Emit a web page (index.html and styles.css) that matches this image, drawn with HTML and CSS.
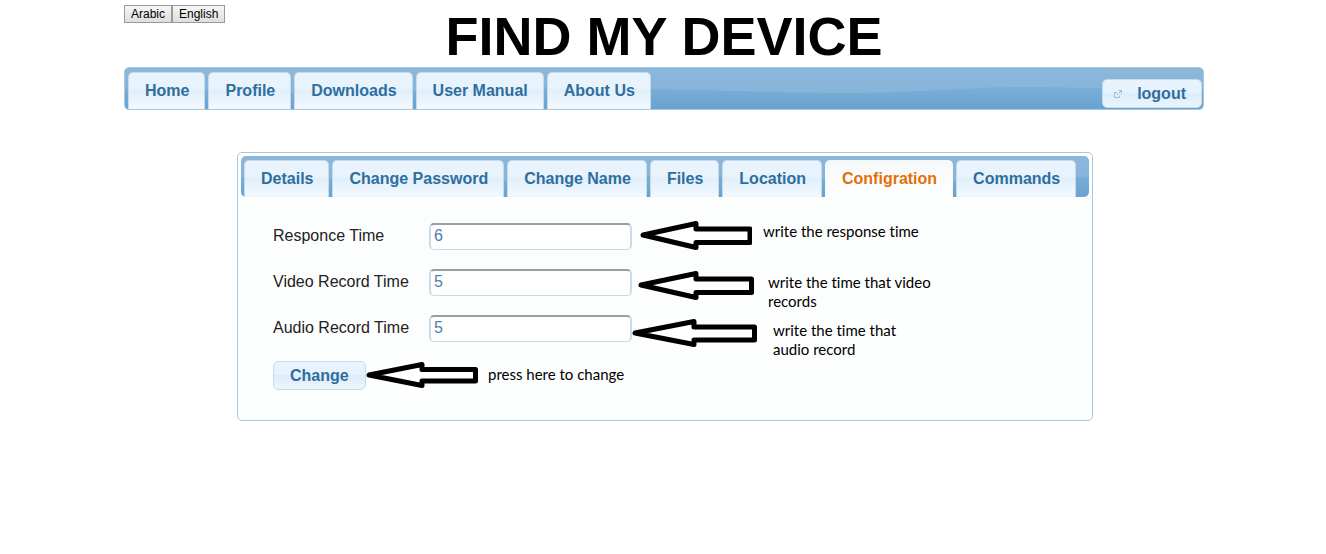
FILE: index.html
```html
<!DOCTYPE html>
<html lang="en">
<head>
<meta charset="utf-8">
<meta name="viewport" content="width=device-width, initial-scale=1">
<title>Find My Device</title>
<link rel="stylesheet" href="styles.css">
</head>
<body>
<div class="page">
  <header class="masthead">
    <div class="languages">
      <button type="button" class="lang">Arabic</button><button type="button" class="lang">English</button>
    </div>
    <h1 class="title">FIND MY DEVICE</h1>
  </header>

  <nav class="bar main-bar" aria-label="Main">
    <a class="tab" href="#home">Home</a>
    <a class="tab" href="#profile">Profile</a>
    <a class="tab" href="#downloads">Downloads</a>
    <a class="tab" href="#manual">User Manual</a>
    <a class="tab" href="#about">About Us</a>
    <button type="button" class="button logout">
      <svg class="logout-icon" width="8" height="8" viewBox="0 0 8 8" fill="none" stroke="#8fc0e6" stroke-width="1" aria-hidden="true">
        <path d="M3 2.500H.5v5h5V5.500"/>
        <path d="M4.500 .5h3v3M7.500 .5L3 5"/>
      </svg>
      logout
    </button>
  </nav>

  <main class="panel">
    <nav class="bar sub-bar" aria-label="Device">
      <a class="tab" href="#details">Details</a>
      <a class="tab" href="#password">Change Password</a>
      <a class="tab" href="#name">Change Name</a>
      <a class="tab" href="#files">Files</a>
      <a class="tab" href="#location">Location</a>
      <a class="tab active" href="#configuration" aria-current="page">Configration</a>
      <a class="tab" href="#commands">Commands</a>
    </nav>

    <form class="settings">
      <label for="response">Responce Time</label>
      <input class="field" id="response" type="text" value="6">
      <label for="video">Video Record Time</label>
      <input class="field" id="video" type="text" value="5">
      <label for="audio">Audio Record Time</label>
      <input class="field" id="audio" type="text" value="5">
      <button type="button" class="button">Change</button>
    </form>

    <div class="note note-response">
      <svg class="arrow" width="112" height="30" viewBox="0 0 112 30" aria-hidden="true"><path d="M3 15L56 3.500V9H110V22.500H56V27.500Z"/></svg>
      <p>write the response time</p>
    </div>
    <div class="note note-video">
      <svg class="arrow" width="116" height="30" viewBox="0 0 116 30" aria-hidden="true"><path d="M3 15L58 3.500V9H113.500V22.500H58V27.500Z"/></svg>
      <p>write the time that video<br>records</p>
    </div>
    <div class="note note-audio">
      <svg class="arrow" width="125" height="30" viewBox="0 0 125 30" aria-hidden="true"><path d="M3 15L62 3.500V9H122.500V22H62V26.500Z"/></svg>
      <p>write the time that<br>audio record</p>
    </div>
    <div class="note note-change">
      <svg class="arrow" width="112" height="30" viewBox="0 0 112 30" aria-hidden="true"><path d="M3 15L56 4.500V9.500H109.500V21H56V25.500Z"/></svg>
      <p>press here to change</p>
    </div>
  </main>
</div>
</body>
</html>
```
FILE: styles.css
```css
* {
  box-sizing: border-box;
}

body {
  margin: 0;
  padding-left: 2px;
  background: #fff;
  color: #222;
  font: 16px/20px "Liberation Sans", Arial, sans-serif;
}

.page {
  max-width: 1080px;
  margin: 0 auto;
}

/* Title and language switch */
.masthead {
  display: grid;
  grid-template-columns: 1fr auto 1fr;
  align-items: start;
  padding-top: 5px;
}

.languages {
  display: flex;
}

.lang {
  height: 18px;
  padding: 0 6px;
  border: 1px solid #999;
  border-radius: 0;
  background: linear-gradient(#f6f6f6, #dedede);
  color: #000;
  font: 12px/16px "Liberation Sans", Arial, sans-serif;
}

.title {
  margin: 0;
  color: #000;
  font-size: 54px;
  line-height: 62px;
}

/* Tab bars */
.bar {
  display: flex;
  gap: 3px;
  border-radius: 5px;
  background:
    url("data:image/svg+xml,%3Csvg xmlns='http://www.w3.org/2000/svg' width='500' height='42'%3E%3ClinearGradient id='g' x2='0' y2='1'%3E%3Cstop stop-color='%237aaed6'/%3E%3Cstop offset='1' stop-color='%2368a2d1'/%3E%3C/linearGradient%3E%3Cpath d='M0 21C80 21 140 25 220 25S340 19 400 19S460 21 500 21V42H0Z' fill='url(%23g)'/%3E%3C/svg%3E") repeat-x,
    linear-gradient(#8bb7db, #84b2d7);
}

.main-bar {
  padding: 4px 1px 0 3px;
  border: 1px solid #a6c9e2;
}

.sub-bar {
  padding: 4px 3px 0;
}

.tab {
  height: 37px;
  padding: 8px 15px 8px 16px;
  border: 1px solid #c5dbec;
  border-bottom: 0;
  border-radius: 5px 5px 0 0;
  background: linear-gradient(#e8f3fd 0, #e8f3fc 45%, #e0effb 46%, #f0f7fe 90%);
  color: #2e6e9e;
  font-weight: bold;
  text-decoration: none;
  white-space: nowrap;
}

.tab.active {
  border-color: #f5f8f9;
  background: linear-gradient(#f5f8f9, #fcfdfd 60%);
  color: #e17009;
}

.button {
  height: 29px;
  padding: 0 16px;
  border: 1px solid #c5dbec;
  border-radius: 5px;
  background: linear-gradient(#e8f3fd 0, #e7f3fc 48%, #dcecfa 50%, #ecf5fd 100%);
  color: #2e6e9e;
  font: bold 16px/20px "Liberation Sans", Arial, sans-serif;
}

.logout {
  display: flex;
  align-items: center;
  gap: 15px;
  margin: 7px 0 1px auto;
  padding: 0 15px 0 11px;
}

/* Configuration panel */
.panel {
  position: relative;
  margin: 42px 111px 0 113px;
  padding: 3px;
  border: 1px solid #a6c9e2;
  border-radius: 5px;
  background: linear-gradient(#fff 0, #fff 44px, #fcfdfd 45px, #fdfefe 100%);
}

.settings {
  display: grid;
  grid-template-columns: 156px 203px;
  row-gap: 19px;
  align-items: center;
  justify-items: start;
  padding: 26px 32px 27px;
}

.settings label {
  padding-bottom: 2px;
}

.field {
  width: 100%;
  height: 27px;
  padding: 0 3px 2px;
  border: 2px solid #ccd9e6;
  border-top-color: #999fa5;
  border-bottom: 1px solid #c5dbec;
  border-radius: 5px;
  background: #fff;
  color: #4a80ab;
  font: 16px/20px "Liberation Sans", Arial, sans-serif;
}

/* Callouts drawn over the panel */
.note {
  position: absolute;
  display: flex;
  color: #000;
  font: 15px/19px Lato, Carlito, sans-serif;
  font-variant-ligatures: none;
  white-space: nowrap;
}

.note p {
  margin: 3px 0 0;
}

.arrow {
  flex: none;
  fill: #fff;
  stroke: #000;
  stroke-width: 5;
  stroke-linejoin: round;
}

.note-response {
  top: 67px;
  left: 402px;
  gap: 11px;
}

.note-response p {
  margin-top: 2px;
}

.note-video {
  top: 117px;
  left: 400px;
  gap: 14px;
}

.note-audio {
  top: 165px;
  left: 394px;
  gap: 16px;
}

.note-change {
  top: 207px;
  left: 128px;
  gap: 10px;
}

.note-change p {
  margin-top: 5px;
}
```
